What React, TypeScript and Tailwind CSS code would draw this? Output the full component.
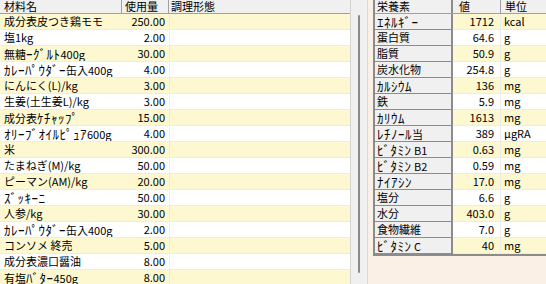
import React from "react";

const leftRows: [string, string][] = [
  ["成分表皮つき鶏モモ", "250.00"],
  ["塩1kg", "2.00"],
  ["無糖ｰｸﾞﾙﾄ400g", "30.00"],
  ["ｶﾚｰﾊﾟｳﾀﾞｰ缶入400g", "4.00"],
  ["にんにく(L)/kg", "3.00"],
  ["生姜(土生姜L)/kg", "3.00"],
  ["成分表ｹﾁｬｯﾌﾟ", "15.00"],
  ["ｵﾘｰﾌﾞｵｲﾙﾋﾟｭｱ600g", "4.00"],
  ["米", "300.00"],
  ["たまねぎ(M)/kg", "50.00"],
  ["ピーマン(AM)/kg", "20.00"],
  ["ｽﾞｯｷｰﾆ", "50.00"],
  ["人参/kg", "30.00"],
  ["ｶﾚｰﾊﾟｳﾀﾞｰ缶入400g", "2.00"],
  ["コンソメ 終売", "5.00"],
  ["成分表濃口醤油", "8.00"],
  ["有塩ﾊﾞﾀｰ450g", "8.00"],
];

const rightRows: [string, string, string][] = [
  ["ｴﾈﾙｷﾞｰ", "1712", "kcal"],
  ["蛋白質", "64.6", "g"],
  ["脂質", "50.9", "g"],
  ["炭水化物", "254.8", "g"],
  ["ｶﾙｼｳﾑ", "136", "mg"],
  ["鉄", "5.9", "mg"],
  ["ｶﾘｳﾑ", "1613", "mg"],
  ["ﾚﾁﾉｰﾙ当", "389", "μgRA"],
  ["ﾋﾞﾀﾐﾝ B1", "0.63", "mg"],
  ["ﾋﾞﾀﾐﾝ B2", "0.59", "mg"],
  ["ﾅｲｱｼﾝ", "17.0", "mg"],
  ["塩分", "6.6", "g"],
  ["水分", "403.0", "g"],
  ["食物繊維", "7.0", "g"],
  ["ﾋﾞﾀﾐﾝ C", "40", "mg"],
];

function T({ s }: { s: string }) {
  const parts = s.split(/([\uFF61-\uFF9F]+)/);
  return (
    <>
      {parts.map((p, i) =>
        /[\uFF61-\uFF9F]/.test(p) ? (
          <span key={i} className="text-[13px] tracking-[0.5px] leading-[15px]">
            {p}
          </span>
        ) : (
          <span key={i}>{p}</span>
        )
      )}
    </>
  );
}

export default function App() {
  return (
    <div className="w-[546px] h-[284px] overflow-hidden flex bg-[#faf0e6] text-[11px] text-black font-['Noto_Sans_CJK_JP',sans-serif] leading-[15px]">
      {/* Left grid */}
      <div className="w-[351px] shrink-0 flex flex-col bg-white border-r border-[#d4d4d4]">
        <div className="flex h-[14px] shrink-0 bg-[#f0f0f0] border-b border-[#a0a0a0] leading-[13px]">
          <div className="w-[122px] shrink-0 border-r border-[#a0a0a0] pl-[4px]">材料名</div>
          <div className="w-[47px] shrink-0 border-r border-[#a0a0a0] pl-[3px]">使用量</div>
          <div className="flex-1 pl-[2px]">調理形態</div>
        </div>
        {leftRows.map(([name, qty], i) => (
          <div
            key={i}
            className={`flex h-[16px] shrink-0 border-b border-[#ececec] ${i % 2 === 0 ? "bg-[#fdf8d0]" : "bg-white"}`}
          >
            <div className="w-[122px] shrink-0 pl-[4px] whitespace-nowrap overflow-hidden">
              <T s={name} />
            </div>
            <div className="w-[48px] shrink-0 text-right pr-[4px] border-r border-[#ececec]">{qty}</div>
            <div className="flex-1" />
          </div>
        ))}
      </div>
      {/* Scrollbar */}
      <div className="w-[17px] shrink-0 bg-[#f0f0f0] border-r border-[#dadada] flex justify-center pt-[15px] pb-[11px]">
        <div className="w-[2px] h-[258px] bg-[#8a8a8a] rounded-full" />
      </div>
      {/* Right panel */}
      <div className="flex-1 pl-[5px]">
        <div className="w-[200px] flex flex-col border-l-2 border-b-2 border-[#8c8c8c]">
          <div className="flex h-[14px] bg-[#f0f0f0] border-b border-[#a0a0a0] leading-[13px]">
            <div className="w-[78px] shrink-0 border-r-2 border-[#8c8c8c] pl-[2px]">栄養素</div>
            <div className="w-[48px] shrink-0 border-r border-[#a0a0a0] pl-[6px]">値</div>
            <div className="flex-1 pl-[4px]">単位</div>
          </div>
          {rightRows.map(([n, v, u], i) => (
            <div key={i} className="flex h-[16px]">
              <div className="w-[78px] shrink-0 bg-[#f0f0f0] border-r-2 border-b border-[#8c8c8c] pl-[2px] leading-[15px] whitespace-nowrap overflow-hidden">
                <T s={n} />
              </div>
              <div
                className={`w-[48px] shrink-0 text-right pr-[6px] border-r border-b border-[#ececec] ${i % 2 === 0 ? "bg-[#fdf8d0]" : "bg-white"}`}
              >
                {v}
              </div>
              <div className={`flex-1 pl-[3px] border-b border-[#ececec] ${i % 2 === 0 ? "bg-[#fdf8d0]" : "bg-white"}`}>
                {u}
              </div>
            </div>
          ))}
        </div>
      </div>
    </div>
  );
}
